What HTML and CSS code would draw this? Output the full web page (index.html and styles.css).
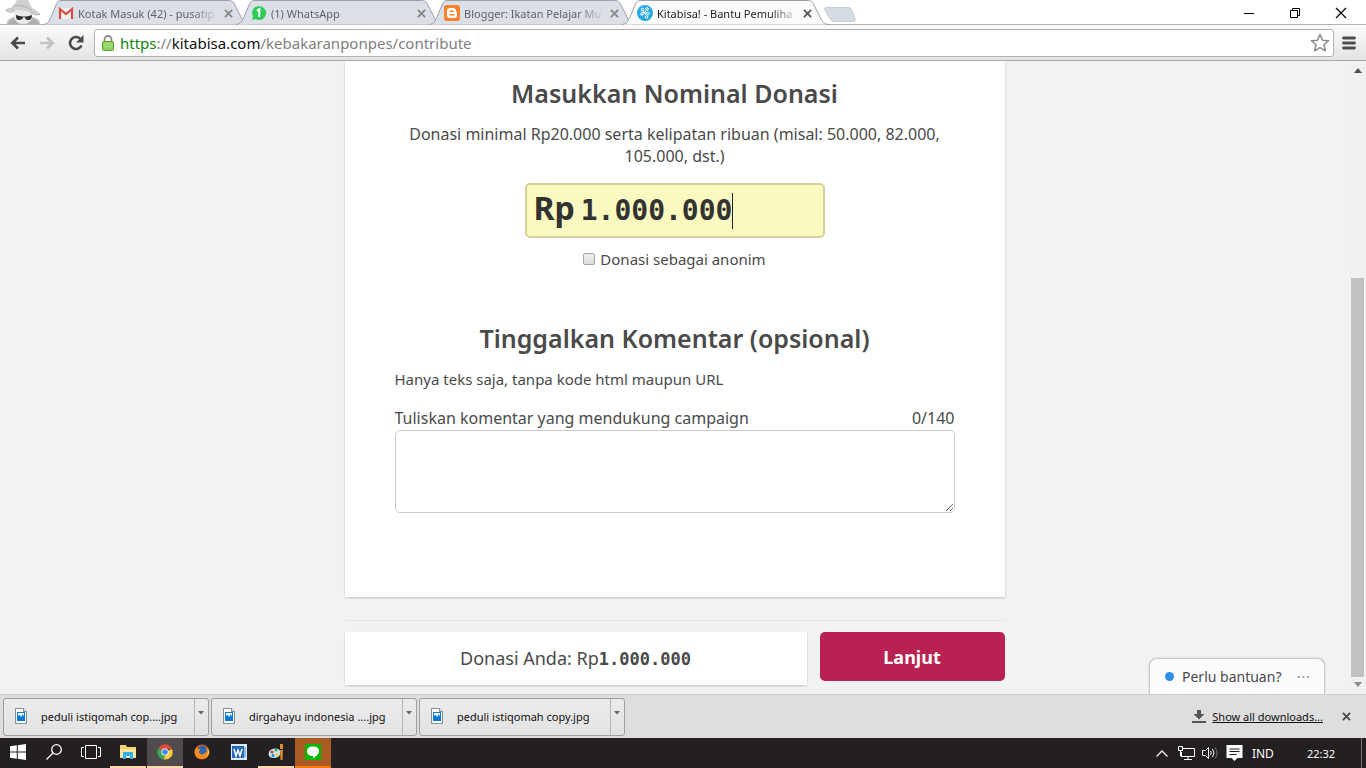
FILE: index.html
```html
<!DOCTYPE html>
<html lang="id">
<head>
<meta charset="utf-8">
<title>Kitabisa! - Bantu Pemulihan</title>
<link rel="stylesheet" href="styles.css">
</head>
<body>
<svg width="0" height="0" class="defs" aria-hidden="true">
  <defs>
    <symbol id="x" viewBox="0 0 10 10"><path d="M1 1l8 8M9 1L1 9" stroke="currentColor" stroke-width="2" fill="none"/></symbol>
    <symbol id="tabshape" viewBox="0 0 209 25"><path d="M0 24.500C5 24 6 21 8 17L13 5C14.500 1.500 15.500.5 19 .5H185C189 .5 190.500 1.500 192 5L199 19C201 23 203 24.500 208 24.500"/></symbol>
    <symbol id="jpg" viewBox="0 0 14 17"><path d="M1.500.5h8l3 3v12h-11z" fill="#fff" stroke="#8d8d8d"/><path d="M9.500.5v3h3" fill="#e6e6e6" stroke="#8d8d8d"/><path d="M3 4h8v9H3z" fill="#0a78d7"/><path d="M4 5h6v3L8.500 6.500 7 9 5.500 6.500 4 8z" fill="#fff"/></symbol>
    <symbol id="down" viewBox="0 0 6 4"><path d="M0 0h6L3 3.500z" fill="#666"/></symbol>
  </defs>
</svg>

<header class="tabstrip">
  <svg class="incognito" viewBox="0 0 38 24" aria-hidden="true">
    <path d="M2 24c0-4 2-5 5-6l3-2h16l4 2c3 1 5 2 5 6z" fill="#c4c4c4"/>
    <path d="M9 10h18v7c0 4-4 7-9 7s-9-3-9-7z" fill="#e9e9e9"/>
    <path d="M1 9c2-1 5-1 7-3l4-6h11l4 8c3 2 6 3 8 6-3 1-6 0-9-1-6-3-11-4-18-2-4 1-7 0-7-2z" fill="#d0d0d0"/>
    <path d="M8 6c6-1 13 0 19 4" stroke="#b2b2b2" fill="none"/>
    <path d="M1 9.500c0 3 4 3 8 2M35 14.500c-3 1-6 0-9-1.500" stroke="#aaa" fill="none"/>
    <path d="M11 15c4 1 5 1.500 8 1.500s5-.5 8-1.500c0 3-1 5-4 5-2 0-3-1.500-3.500-3h-1c-.5 1.500-2 3-4 3-3 0-3.500-2-3.500-5z" fill="#2e2e2e"/>
    <path d="M2 24l6-6 6 6M34 24l-5-6-7 6" fill="#adadad"/>
  </svg>
  <nav class="tabs" aria-label="Tab">
    <div class="tab">
      <svg class="shape"><use href="#tabshape"/></svg>
      <svg class="fav" viewBox="0 0 16 16"><path d="M1 3h14v11H1z" fill="#f1f1f1"/><path d="M2 14V4l6 5 6-5v10" fill="none" stroke="#db4b3f" stroke-width="2.200"/></svg>
      <a class="label" href="#">Kotak Masuk (42) - pusatip</a>
      <button class="close" aria-label="Tutup"><svg><use href="#x"/></svg></button>
    </div>
    <div class="tab">
      <svg class="shape"><use href="#tabshape"/></svg>
      <svg class="fav" viewBox="0 0 16 16"><path d="M8 1a7 7 0 1 1-3.500 13L1 15l1-3.500A7 7 0 0 1 8 1z" fill="#2ecc57"/><path d="M6 5.800L8.300 4.200V12" stroke="#fff" stroke-width="2" fill="none"/></svg>
      <a class="label" href="#">(1) WhatsApp</a>
      <button class="close" aria-label="Tutup"><svg><use href="#x"/></svg></button>
    </div>
    <div class="tab">
      <svg class="shape"><use href="#tabshape"/></svg>
      <svg class="fav" viewBox="0 0 16 16"><rect width="16" height="16" rx="2.500" fill="#f8822f"/><path d="M6 3h3c2 0 3 1 3 3 0 1 1 .6 1 1.600V10c0 2-1 3-3 3H6c-2 0-3-1-3-3V6c0-2 1-3 3-3z" fill="#fff"/><path d="M6 6.300h3M6 9.800h4" stroke="#f8822f" stroke-width="1.400" stroke-linecap="round"/></svg>
      <a class="label" href="#">Blogger: Ikatan Pelajar Mu</a>
      <button class="close" aria-label="Tutup"><svg><use href="#x"/></svg></button>
    </div>
    <div class="tab active">
      <svg class="shape"><use href="#tabshape"/></svg>
      <svg class="fav" viewBox="0 0 16 16"><circle cx="8" cy="8" r="8" fill="#27a9e0"/><g fill="none" stroke="#fff" stroke-width="1"><circle cx="5.500" cy="4.500" r="1.300"/><circle cx="10" cy="4" r="1.300"/><circle cx="5" cy="9" r="1.300"/><circle cx="11" cy="8.500" r="1.300"/><circle cx="9.500" cy="12" r="1.300"/><path d="M6 6l3 4M9.500 5.500L6 8.500M8 8h2"/></g></svg>
      <a class="label" href="#">Kitabisa! - Bantu Pemuliha</a>
      <button class="close" aria-label="Tutup"><svg><use href="#x"/></svg></button>
    </div>
  </nav>
  <button class="newtab" aria-label="Tab baru"><svg viewBox="0 0 34 18"><path d="M4 3.500h21c2 0 3 1 4 3l3 8c1 2 0 3-2 3H11c-2 0-3-1-4-3L2 6.500C1 4.500 2 3.500 4 3.500z" fill="#d6dce4" stroke="#c9ced5"/></svg></button>
  <div class="wincontrols">
    <button aria-label="Minimalkan"><svg viewBox="0 0 12 12"><path d="M1 6.500h10" stroke="#000"/></svg></button>
    <button aria-label="Pulihkan"><svg viewBox="0 0 12 12"><path d="M1.500 3.500h7v7h-7zM3.500 3V1.500h7v7H9" fill="none" stroke="#000"/></svg></button>
    <button aria-label="Tutup jendela"><svg viewBox="0 0 12 12"><path d="M1 1l10 10M11 1L1 11" stroke="#000" stroke-width="1.200"/></svg></button>
  </div>
</header>

<div class="toolbar">
  <button class="nav" aria-label="Kembali"><svg viewBox="0 0 16 14"><path d="M15 7H2M8 1.500L2.300 7 8 12.500" fill="none" stroke="#4a4a4a" stroke-width="2.600"/></svg></button>
  <button class="nav" aria-label="Maju"><svg viewBox="0 0 16 14"><path d="M1 7h13M8 1.500L13.700 7 8 12.500" fill="none" stroke="#c2c2c2" stroke-width="2.600"/></svg></button>
  <button class="nav" aria-label="Muat ulang"><svg viewBox="0 0 16 16"><path d="M13.500 10.500A6 6 0 1 1 12 3.500" fill="none" stroke="#4a4a4a" stroke-width="2.600"/><path d="M15.500 0v7.500H8z" fill="#4a4a4a"/></svg></button>
  <div class="omnibox">
    <svg class="lock" viewBox="0 0 12 16"><path d="M2.500 8V4.500a3.500 3.500 0 0 1 7 0V8" fill="none" stroke="#8c8c8c" stroke-width="1.800"/><rect x=".5" y="6.500" width="11" height="9" rx="1" fill="#8ed35f" stroke="#5f9e3a"/><path d="M2 9h8M2 11.500h8" stroke="#a9e382"/></svg>
    <a class="url" href="#"><span class="scheme">https</span>://<span class="host">kitabisa.com</span>/kebakaranponpes/contribute</a>
    <svg class="star" viewBox="0 0 20 19"><path d="M10 1.500l2.500 5.700 6 .6-4.600 4 1.500 6L10 14.700l-5.400 3.100 1.500-6-4.600-4 6-.6z" fill="none" stroke="#8a8a8a" stroke-width="1.500" stroke-linejoin="round"/></svg>
  </div>
  <button class="menu" aria-label="Menu"><svg viewBox="0 0 14 14"><path d="M1.500 2h11M1.500 7h11M1.500 12h11" stroke="#4e4e4e" stroke-width="2.800" stroke-linecap="round"/></svg></button>
</div>

<div class="viewport">
  <main class="page">
    <form class="content">
      <section class="card">
        <h2>Masukkan Nominal Donasi</h2>
        <p class="hint">Donasi minimal Rp20.000 serta kelipatan ribuan (misal: 50.000, 82.000, 105.000, dst.)</p>
        <div class="amount">
          <label for="nominal">Rp</label>
          <div class="amount-field"><input id="nominal" type="text" value="1.000.000"><span class="caret"></span></div>
        </div>
        <div class="anon"><input id="anonim" type="checkbox"><label for="anonim">Donasi sebagai anonim</label></div>
        <h2 class="second">Tinggalkan Komentar (opsional)</h2>
        <p class="note">Hanya teks saja, tanpa kode html maupun URL</p>
        <div class="comment-head"><label for="komentar">Tuliskan komentar yang mendukung campaign</label><span>0/140</span></div>
        <textarea id="komentar"></textarea>
      </section>
      <hr>
      <div class="summary">
        <div class="total">Donasi Anda: Rp<b>1.000.000</b></div>
        <button class="submit" type="button">Lanjut</button>
      </div>
    </form>
    <button class="chat"><span class="dot"></span><span>Perlu bantuan?</span><svg viewBox="0 0 11 2"><path d="M0 0h2v2H0zM4.500 0h2v2h-2zM9 0h2v2H9z" fill="#a5a5a5"/></svg></button>
  </main>
  <div class="scrollbar">
    <svg viewBox="0 0 8 5"><path d="M0 5h8L4 0z" fill="#505050"/></svg>
    <div class="track"><div class="thumb"></div></div>
    <svg viewBox="0 0 8 5"><path d="M0 0h8L4 5z" fill="#8a8a8a"/></svg>
  </div>
</div>

<div class="downloads">
  <div class="dl"><button class="file"><svg><use href="#jpg"/></svg><span>peduli istiqomah cop....jpg</span></button><button class="more" aria-label="Opsi"><svg><use href="#down"/></svg></button></div>
  <div class="dl"><button class="file"><svg><use href="#jpg"/></svg><span>dirgahayu indonesia ....jpg</span></button><button class="more" aria-label="Opsi"><svg><use href="#down"/></svg></button></div>
  <div class="dl"><button class="file"><svg><use href="#jpg"/></svg><span>peduli istiqomah copy.jpg</span></button><button class="more" aria-label="Opsi"><svg><use href="#down"/></svg></button></div>
  <a class="showall" href="#"><svg viewBox="0 0 14 13"><path d="M5 0h4v4h3.500L7 9.500 1.500 4H5zM0 11h14v2H0z" fill="#555"/></svg><span>Show all downloads...</span></a>
  <button class="dlclose" aria-label="Tutup"><svg><use href="#x"/></svg></button>
</div>

<footer class="taskbar">
  <div class="apps">
    <button class="app" aria-label="Start"><svg viewBox="0 0 16 16"><path d="M0 2.300L6.800 1.300V7.500H0zM7.800 1.200L16 0v7.500H7.800zM0 8.500h6.800v6.200L0 13.700zM7.800 8.500H16V16l-8.200-1.200z" fill="#fff"/></svg></button>
    <button class="app" aria-label="Cari"><svg viewBox="0 0 16 16"><circle cx="10.500" cy="5.500" r="4.800" fill="none" stroke="#fff" stroke-width="1.300"/><path d="M7 9L.5 15.500" stroke="#fff" stroke-width="1.300"/></svg></button>
    <button class="app" aria-label="Tampilan tugas"><svg class="wide" viewBox="0 0 20 14"><path d="M4.500.5h11v13h-11zM3 2.500H.5v9H3M17 2.500h2.500v9H17" fill="none" stroke="#fff"/></svg></button>
    <button class="app open" aria-label="File Explorer"><svg viewBox="0 0 16 16"><path d="M0 1h6l1 2h9v11H0z" fill="#f7d272"/><path d="M0 5h16v9H0z" fill="#fce49b"/><path d="M3 15V8h10v7h-3v-3H6v3z" fill="#2cb4e8"/></svg></button>
    <button class="app open current" aria-label="Chrome"><svg viewBox="0 0 16 16"><path d="M8 8L1.500 4A7.500 7.500 0 0 1 15 5H8z" fill="#dc4a38"/><path d="M8 8l7-3a7.500 7.500 0 0 1-8 10.500z" fill="#fccb39"/><path d="M8 8l-1 7.500A7.500 7.500 0 0 1 1.500 4z" fill="#3aa757"/><circle cx="8" cy="8" r="3.600" fill="#fff"/><circle cx="8" cy="8" r="2.800" fill="#4285f4"/></svg></button>
    <button class="app" aria-label="Firefox"><svg viewBox="0 0 16 16"><circle cx="8" cy="8" r="7.500" fill="#e66000"/><circle cx="8.500" cy="6.500" r="5" fill="#2868b5"/><path d="M1 5l2-2c0 2 1 2 3 2 1 1-1 2-1 3 1 3 4 3 6 1 2-1 2-3 1-6 5 4 3 12-4 12S0 10 1 5z" fill="#f48b20"/><path d="M13 4c2 3 1 7-2 9 5-1 5-6 2-9z" fill="#ffcb2d"/></svg></button>
    <button class="app" aria-label="Word"><svg viewBox="0 0 16 16"><path d="M0 0h16v16H0z" fill="#dce8f8"/><path d="M1 2h12v12H1z" fill="#2468b8"/><path d="M3 5l2 7 2-6 2 6 2-7" fill="none" stroke="#fff" stroke-width="1.500"/><path d="M14 3v10" stroke="#4a88cc"/></svg></button>
    <button class="app open" aria-label="Paint"><svg viewBox="0 0 16 16"><path d="M1 8c1-4 10-5 11-1s-1 7-6 7-6-3-5-6z" fill="#c9e4f3"/><circle cx="4" cy="8" r="1.500" fill="#d33"/><circle cx="8" cy="6" r="1.500" fill="#3a4"/><circle cx="5" cy="11.500" r="1.500" fill="#28c"/><circle cx="9" cy="11" r="1.500" fill="#ec3"/><path d="M12 6h3l-.5 10h-2zM12 0h3v5h-3z" fill="#e08a2c"/></svg></button>
    <button class="app open line" aria-label="LINE"><svg viewBox="0 0 16 16"><rect width="16" height="16" rx="1" fill="#00b900"/><path d="M8 2.500c4 0 6 2 6 4.700 0 2.800-3 4.800-6 7.300v-2.500c-4 0-6-2-6-4.800s2-4.700 6-4.700z" fill="#fff"/></svg></button>
  </div>
  <div class="tray">
    <svg class="chev" viewBox="0 0 12 7"><path d="M.5 6.500L6 1l5.500 5.500" fill="none" stroke="#eee" stroke-width="1.300"/></svg>
    <svg viewBox="0 0 17 14"><path d="M5 2.500h11.500v8H3.500V6M10 10.500v3M6 13.500h8" fill="none" stroke="#fff"/><path d="M.5.500h4v4h-4zM2.500 5v5H4" fill="none" stroke="#fff"/></svg>
    <svg viewBox="0 0 17 14"><path d="M.5 4.500h3l3-3v11l-3-3h-3z" fill="none" stroke="#fff"/><path d="M8.500 5q1.500 2 0 4M10.500 3q3 4 0 8" fill="none" stroke="#fff"/><path d="M13 1.500q4 5.500 0 11" fill="none" stroke="#777"/></svg>
    <svg viewBox="0 0 16 16"><path d="M0 0h16v13h-5l-3 3-3-3H0z" fill="#fff"/><path d="M3 4h10M3 6.500h10M3 9.500h7" stroke="#241f21"/></svg>
    <span class="lang">IND</span>
    <time>22:32</time>
    <button class="desktop" aria-label="Tampilkan desktop"></button>
  </div>
</footer>
</body>
</html>
```

FILE: styles.css
```css
* { box-sizing: border-box; }
body {
  margin: 0;
  height: 100vh;
  display: flex;
  flex-direction: column;
  overflow: hidden;
  background: #fff;
  font-family: "Noto Sans", "Open Sans", sans-serif;
  font-size: 11px;
  color: #4a4a4a;
}
button { border: 0; padding: 0; background: none; font: inherit; color: inherit; }
a { color: inherit; text-decoration: none; }
svg { display: block; flex: none; }
.defs { position: absolute; }

/* Tab strip */
.tabstrip { flex: none; display: flex; height: 25px; padding-left: 5px; }
.incognito { width: 38px; height: 24px; }
.tabs { display: flex; }
.tab {
  position: relative;
  display: flex;
  align-items: center;
  width: 209px;
  height: 25px;
  margin-right: -16px;
  padding: 1px 17px 0 15px;
  color: #5f6368;
}
.shape { position: absolute; left: 0; top: 0; width: 209px; height: 25px; fill: #dbe0e8; stroke: #9aa0a6; }
.active { color: #222; z-index: 1; }
.active .shape { fill: #fbfbfb; }
.fav { position: relative; width: 16px; height: 16px; margin-right: 4px; }
.label {
  position: relative;
  width: 142px;
  white-space: nowrap;
  mask-image: linear-gradient(to right, #000 80%, transparent);
}
.close { position: relative; margin-left: 4px; color: #858585; }
.close svg { width: 9px; height: 9px; }
.active .close { color: #555; }
.newtab { margin-left: 8px; width: 34px; height: 24px; padding-top: 2px; }
.newtab svg { width: 34px; height: 18px; }
.wincontrols { display: flex; margin-left: auto; padding-right: 2px; }
.wincontrols button { width: 46px; display: grid; place-items: center; }
.wincontrols svg { width: 12px; height: 12px; }

/* Toolbar */
.toolbar {
  flex: none;
  display: flex;
  align-items: center;
  height: 37px;
  margin-top: -1px;
  padding: 0 10px 0 3px;
  border-top: 1px solid #b3b3b3;
  border-bottom: 1px solid #a9a9a9;
  background: linear-gradient(#fbfbfb, #e4e4e4);
}
.nav { width: 29px; display: grid; place-items: center; }
.nav svg { width: 16px; height: 16px; }
.omnibox {
  flex: 1;
  display: flex;
  align-items: center;
  height: 28px;
  margin-left: 4px;
  padding: 0 3px 0 7px;
  border: 1px solid #b1b1b1;
  border-radius: 3px;
  background: #fff;
  font-size: 15px;
}
.lock { width: 12px; height: 16px; margin-right: 6px; }
.url { flex: 1; color: #7f7f7f; }
.scheme { color: #0b8a0b; }
.host { color: #111; }
.star { width: 20px; height: 19px; }
.menu { margin-left: 8px; }
.menu svg { width: 14px; height: 14px; }

/* Page */
.viewport { flex: 1; min-height: 0; display: flex; background: #f1f2f4; }
.page { position: relative; flex: 1; overflow: hidden; }
.content { max-width: 660px; margin: 0 auto; }
.card {
  padding: 14px 50px 84px;
  background: #fff;
  box-shadow: 0 1px 2px rgba(0, 0, 0, .2);
}
h2 { margin: 0; font-size: 25px; font-weight: 600; line-height: 36px; text-align: center; }
p { margin: 0; font-size: 15px; line-height: 22px; }
.hint { margin-top: 12px; font-size: 16px; text-align: center; }
.amount {
  display: flex;
  align-items: center;
  width: 300px;
  height: 55px;
  margin: 16px auto 0;
  padding: 0 7px;
  border: 2px solid #d9cf9c;
  border-radius: 5px;
  background: #fafac0;
  color: #333;
}
.amount label { font-size: 32px; font-weight: 700; line-height: 40px; padding-bottom: 6px; }
.amount-field { position: relative; flex: 1; }
.amount input {
  width: 100%;
  padding: 0 0 0 6px;
  border: 0;
  outline: 0;
  background: none;
  color: inherit;
  font: 700 28px/36px "DejaVu Sans Mono", monospace;
}
.caret { position: absolute; left: 157px; top: 0; width: 1px; height: 36px; background: #222; }
.anon { display: flex; justify-content: center; align-items: center; gap: 5px; margin-top: 10px; font-size: 15px; line-height: 22px; }
.anon input {
  appearance: none;
  width: 12px;
  height: 12px;
  margin: 0;
  border: 1px solid #a6a6a6;
  border-radius: 2px;
  background: linear-gradient(#eee, #dcdcdc);
}
.second { margin-top: 50px; }
.note { margin-top: 12px; }
.comment-head { display: flex; justify-content: space-between; margin-top: 16px; font-size: 16px; line-height: 24px; }
textarea {
  display: block;
  width: 100%;
  height: 83px;
  border: 1px solid #ccc;
  border-radius: 5px;
  background: #fff;
  font: inherit;
  resize: vertical;
}
hr { margin: 23px 0 11px; border: 0; border-top: 1px solid #e6e7e9; }
.summary { display: flex; align-items: flex-start; gap: 13px; }
.total {
  flex: 1;
  background: #fff;
  box-shadow: 0 1px 2px rgba(0, 0, 0, .2);
  font-size: 18px;
  line-height: 53px;
  text-align: center;
}
.total b { font: 700 17px "DejaVu Sans Mono", monospace; }
.submit {
  width: 185px;
  height: 49px;
  border-radius: 5px;
  background: #b82151;
  color: #fff;
  font-size: 18px;
  font-weight: 700;
}
.chat {
  position: absolute;
  right: 24px;
  bottom: 0;
  display: flex;
  align-items: center;
  width: 176px;
  height: 36px;
  padding: 0 15px;
  border: 1px solid #c8cacc;
  border-bottom: 0;
  border-radius: 8px 8px 0 0;
  background: #fcfcfe;
  box-shadow: 0 0 2px rgba(0, 0, 0, .2);
  font-size: 14px;
}
.dot { width: 9px; height: 9px; margin-right: 8px; border-radius: 50%; background: #2f90e8; }
.chat svg { width: 11px; height: 2px; margin-left: auto; }
.scrollbar { flex: none; display: flex; flex-direction: column; align-items: center; width: 17px; padding: 7px 0; background: #f1f1f1; }
.scrollbar svg { width: 8px; height: 5px; }
.track { flex: 1; display: flex; flex-direction: column; justify-content: flex-end; width: 13px; padding-bottom: 5px; }
.thumb { height: 66%; background: #c1c1c1; }

/* Downloads */
.downloads {
  flex: none;
  display: flex;
  align-items: center;
  gap: 2px;
  height: 44px;
  padding: 0 15px 0 3px;
  border-top: 1px solid #d0d0d0;
  background: #dedede;
  color: #111;
}
.dl { display: flex; width: 206px; height: 38px; border: 1px solid #9f9f9f; border-radius: 3px; background: linear-gradient(#ececec, #e2e2e2); }
.file { flex: 1; display: flex; align-items: center; gap: 13px; padding-left: 10px; }
.file svg { width: 14px; height: 17px; }
.more { display: flex; align-items: flex-start; width: 14px; padding: 12px 3px; border-left: 1px solid #b5b5b5; }
.more svg { width: 6px; height: 4px; }
.showall { display: flex; align-items: center; gap: 6px; margin-left: auto; }
.showall svg { width: 14px; height: 13px; }
.showall span { text-decoration: underline; }
.dlclose { margin-left: 17px; color: #444; }
.dlclose svg { width: 9px; height: 9px; }

/* Taskbar */
.taskbar { flex: none; display: flex; justify-content: space-between; height: 30px; background: #241f21; color: #fff; }
.apps, .tray { display: flex; align-items: center; }
.apps { gap: 1px; }
.app { display: grid; place-items: center; width: 36px; height: 30px; border-bottom: 2px solid transparent; }
.app:first-child { width: 35px; }
.app svg { width: 16px; height: 16px; }
.app .wide { width: 20px; height: 14px; }
.open { border-color: #fbd9ac; }
.current { background: #504b4d; }
.line { background: #a85c24; border-color: #ff7a0e; }
.tray { gap: 7px; font-size: 12px; }
.tray svg { width: 17px; height: 16px; }
.tray .chev { width: 12px; height: 7px; margin-right: 3px; }
.lang { margin-left: 2px; }
time { margin-left: 26px; margin-right: 19px; font-size: 11px; }
.desktop { width: 5px; height: 30px; border-left: 1px solid #777; }
```
